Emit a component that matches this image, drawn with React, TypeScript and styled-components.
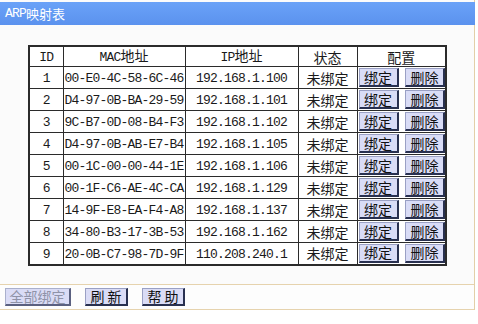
import React from "react";
import styled, { createGlobalStyle } from "styled-components";

interface Entry {
  id: number;
  mac: string;
  ip: string;
}

const entries: Entry[] = [
  { id: 1, mac: "00-E0-4C-58-6C-46", ip: "192.168.1.100" },
  { id: 2, mac: "D4-97-0B-BA-29-59", ip: "192.168.1.101" },
  { id: 3, mac: "9C-B7-0D-08-B4-F3", ip: "192.168.1.102" },
  { id: 4, mac: "D4-97-0B-AB-E7-B4", ip: "192.168.1.105" },
  { id: 5, mac: "00-1C-00-00-44-1E", ip: "192.168.1.106" },
  { id: 6, mac: "00-1F-C6-AE-4C-CA", ip: "192.168.1.129" },
  { id: 7, mac: "14-9F-E8-EA-F4-A8", ip: "192.168.1.137" },
  { id: 8, mac: "34-80-B3-17-3B-53", ip: "192.168.1.162" },
  { id: 9, mac: "20-0B-C7-98-7D-9F", ip: "110.208.240.1" },
];

const GlobalStyle = createGlobalStyle`
  html, body {
    margin: 0;
    padding: 0;
    background: #ffffff;
  }
  body {
    font-family: "Noto Sans CJK SC", sans-serif;
  }
`;

const ArpTable: React.FC = () => {
  return (
    <>
      <GlobalStyle />
      <Page>
        <TitleBar>
          <Mono>ARP</Mono>映射表
        </TitleBar>
        <Content>
          <Table>
            <colgroup>
              <col style={{ width: 34 }} />
              <col style={{ width: 122 }} />
              <col style={{ width: 113 }} />
              <col style={{ width: 59 }} />
              <col style={{ width: 89 }} />
            </colgroup>
            <thead>
              <Row head>
                <Th><Mono>ID</Mono></Th>
                <Th><Mono>MAC</Mono>地址</Th>
                <Th><Mono>IP</Mono>地址</Th>
                <Th>状态</Th>
                <Th>配置</Th>
              </Row>
            </thead>
            <tbody>
              {entries.map(e => (
                <Row key={e.id}>
                  <Td><Mono>{e.id}</Mono></Td>
                  <Td align="left"><Mono>{e.mac}</Mono></Td>
                  <Td><Mono>{e.ip}</Mono></Td>
                  <Td>未绑定</Td>
                  <ConfigTd>
                    <Actions>
                      <CellButton>绑定</CellButton>
                      <CellButton>删除</CellButton>
                    </Actions>
                  </ConfigTd>
                </Row>
              ))}
            </tbody>
          </Table>
        </Content>
        <Footer>
          <FootButton disabled width={66}>全部绑定</FootButton>
          <FootButton width={43}>刷 新</FootButton>
          <FootButton width={43}>帮 助</FootButton>
        </Footer>
      </Page>
    </>
  );
};

const Page = styled.div`
  width: 474px;
  padding-top: 2px;
  background: #fbfbfb;
  border-right: 1px solid #e3cfa8;
`;

const TitleBar = styled.div`
  height: 23px;
  margin-right: -1px;
  display: flex;
  align-items: center;
  padding-left: 5px;
  background: linear-gradient(#6aa2f8, #5b92ee);
  color: #ffffff;
  font-size: 13px;
`;

const Content = styled.div`
  padding: 20px 0 18px 28px;
`;

const Table = styled.table`
  border-collapse: collapse;
  table-layout: fixed;
  width: 417px;
  border: 2px solid #2b2b2b;
  background: #ffffff;
`;

const Row = styled.tr<{ head?: boolean }>`
  height: ${({ head }) => (head ? "20px" : "22px")};
`;

const Mono = styled.span`
  font-family: "Liberation Mono", monospace;
  font-size: 13px;
  letter-spacing: -0.8px;
`;

const Th = styled.th`
  padding: 0;
  border: 1px solid #2b2b2b;
  font-weight: normal;
  font-size: 14px;
  line-height: 16px;
  color: #1a1a1a;
  text-align: center;
`;

const Td = styled.td<{ align?: string }>`
  padding: 0 0 0 ${({ align }) => (align === "left" ? "1px" : "0")};
  border: 1px solid #2b2b2b;
  font-size: 14px;
  line-height: 16px;
  color: #1a1a1a;
  text-align: ${({ align }) => align || "center"};
  white-space: nowrap;
  overflow: hidden;
`;

const ConfigTd = styled.td`
  padding: 0;
  border: 1px solid #2b2b2b;
`;

const Actions = styled.div`
  display: flex;
  justify-content: space-between;
  padding: 0 0 0 1px;
`;

const CellButton = styled.button`
  width: 40px;
  height: 19px;
  padding: 0;
  background: #d9dcf6;
  border-style: solid;
  border-width: 1px 2px 2px 1px;
  border-color: #9aa0c4 #283050 #283050 #9aa0c4;
  font-family: "Noto Sans CJK SC", sans-serif;
  font-size: 14px;
  line-height: 15px;
  color: #111111;
`;

const Footer = styled.div`
  height: 24px;
  display: flex;
  align-items: center;
  gap: 14px;
  padding-left: 5px;
  border-top: 1px solid #e6d3ae;
  border-bottom: 1px solid #e6d3ae;
  background: #fdfdfd;
`;

const FootButton = styled.button<{ width: number }>`
  width: ${({ width }) => width}px;
  height: 18px;
  padding: 0;
  background: #dadcf6;
  border-style: solid;
  border-width: 1px 2px 2px 1px;
  border-color: #9aa0c4 #283050 #283050 #9aa0c4;
  font-family: "Noto Sans CJK SC", sans-serif;
  font-size: 14px;
  line-height: 14px;
  color: #111111;
  &:disabled {
    color: #8f93a8;
    border-color: #aab0cc #5a6080 #5a6080 #aab0cc;
  }
`;

export default ArpTable;
